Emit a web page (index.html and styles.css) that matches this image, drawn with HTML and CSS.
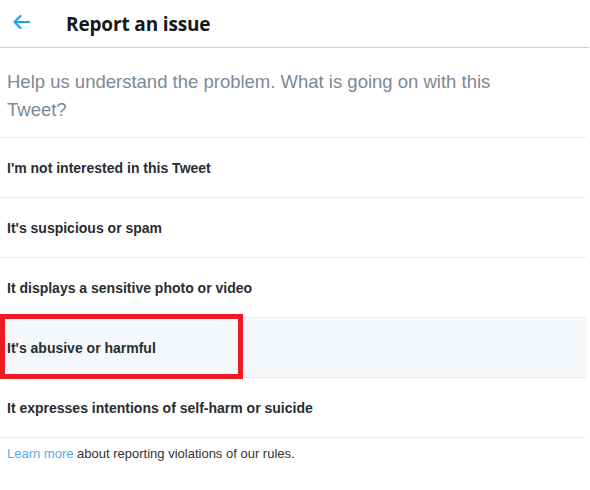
FILE: index.html
```html
<!DOCTYPE html>
<html>
<head>
<meta charset="utf-8">
<link rel="stylesheet" href="styles.css">
</head>
<body>
<div class="page">
  <header class="header">
    <span class="back">
      <svg width="18" height="16" viewBox="0 0 18 16"><path d="M17 8H2.5M8.5 2L2.5 8l6 6" fill="none" stroke="#1da1f2" stroke-width="2.2" stroke-linecap="round" stroke-linejoin="round"/></svg>
    </span>
    <h1 class="title">Report an issue</h1>
  </header>
  <div class="question-wrap">
    <p class="question">Help us understand the problem. What is going on with this Tweet?</p>
  </div>
  <ul class="options">
    <li class="option">I'm not interested in this Tweet</li>
    <li class="option">It's suspicious or spam</li>
    <li class="option">It displays a sensitive photo or video</li>
    <li class="option option-hover">It's abusive or harmful<span class="mark"></span></li>
    <li class="option">It expresses intentions of self-harm or suicide</li>
  </ul>
  <p class="footer"><a class="link" href="#">Learn more</a> about reporting violations of our rules.</p>
</div>
</body>
</html>
```
FILE: styles.css
```css
html, body { margin: 0; padding: 0; background: #fff; }
.page { width: 590px; font-family: "Liberation Sans", Arial, sans-serif; }
.header {
  height: 48px;
  display: flex;
  align-items: center;
  border-bottom: 1px solid #c4d3de;
  width: 589px;
  box-sizing: border-box;
}
.back { width: 66px; display: flex; padding-left: 12px; padding-bottom: 4px; box-sizing: border-box; }
.back svg { display: block; }
.title {
  margin: 0;
  font-size: 19px;
  font-weight: 700;
  color: #14171a;
  font-family: "Open Sans", "Liberation Sans", sans-serif;
  letter-spacing: -0.15px;
}
.question-wrap {
  padding: 20px 7px 13px;
  border-bottom: 1px solid #e6ecf0;
  width: 586px;
  box-sizing: border-box;
}
.question {
  margin: 0;
  max-width: 510px;
  font-size: 18.5px;
  line-height: 28px;
  color: #7b8995;
}
.options { list-style: none; margin: 0; padding: 0; width: 586px; }
.option {
  position: relative;
  height: 60px;
  box-sizing: border-box;
  border-bottom: 1px solid #e6ecf0;
  display: flex;
  align-items: center;
  padding-left: 7px;
  font-size: 14px;
  font-weight: 700;
  color: #292c31;
  font-family: "Liberation Sans", Arial, sans-serif;
}
.option-hover { background: #f5f8fa; }
.mark {
  position: absolute;
  left: 0;
  top: -4px;
  width: 243px;
  height: 65px;
  box-sizing: border-box;
  border: 5px solid #ed1c24;
}
.footer {
  margin: 0;
  padding: 8px 7px;
  font-size: 13px;
  color: #333;
}
.link { color: #55acee; text-decoration: none; }
```
